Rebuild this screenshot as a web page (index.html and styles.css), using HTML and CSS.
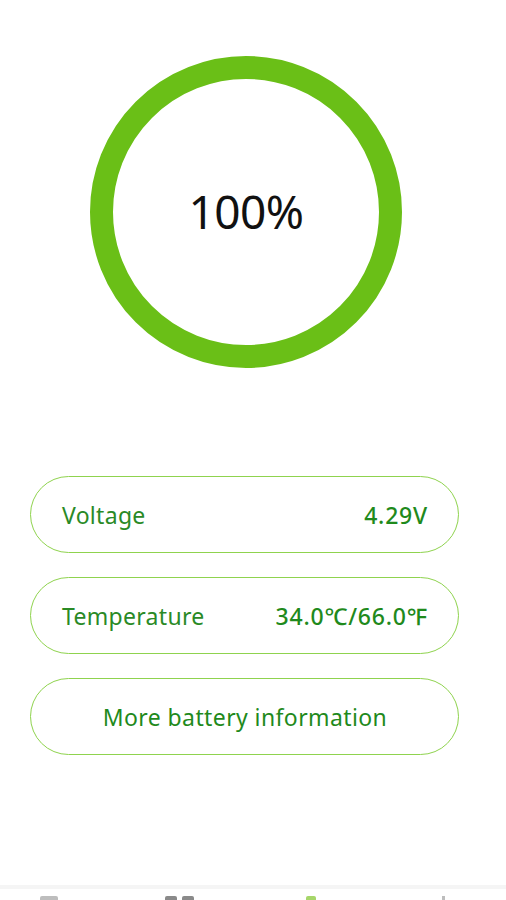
FILE: index.html
```html
<!DOCTYPE html>
<html lang="en">
<head>
<meta charset="utf-8">
<title>Battery</title>
<link rel="stylesheet" href="styles.css">
</head>
<body>
<div class="app">
  <main class="content">
    <section class="gauge-wrap">
      <div class="gauge"><span class="gauge-value">100%</span></div>
    </section>
    <section class="cards">
      <div class="card row">
        <span class="label">Voltage</span>
        <span class="value">4.29V</span>
      </div>
      <div class="card row">
        <span class="label">Temperature</span>
        <span class="value">34.0℃/66.0℉</span>
      </div>
      <div class="card center">
        <span class="link">More battery information</span>
      </div>
    </section>
  </main>
  <nav class="tabbar">
    <span class="tab tab-1"></span>
    <span class="tab tab-2"><i></i><i></i></span>
    <span class="tab tab-3"></span>
    <span class="tab tab-4"></span>
  </nav>
</div>
</body>
</html>
```
FILE: styles.css
```css
* { box-sizing: border-box; }
html, body {
  margin: 0;
  padding: 0;
  background: #ffffff;
}
body {
  font-family: "Noto Sans", "Open Sans", Arial, sans-serif;
  overflow: hidden;
}
.app {
  height: 100vh;
  overflow: hidden;
  display: flex;
  flex-direction: column;
}
.content {
  height: 885px;
  flex: none;
  padding: 56px 47px 0 30px;
}
.gauge-wrap {
  display: flex;
  justify-content: center;
  padding-left: 3px;
}
.gauge {
  width: 312px;
  height: 312px;
  border-radius: 50%;
  border: 23px solid #6abf17;
  display: flex;
  align-items: center;
  justify-content: center;
}
.gauge-value {
  font-size: 46px;
  font-weight: 400;
  color: #111111;
  letter-spacing: -0.5px;
  margin-top: -2px;
}
.cards {
  margin-top: 108px;
  display: flex;
  flex-direction: column;
  gap: 24px;
}
.card {
  height: 77px;
  border: 1.5px solid #8fd34e;
  border-radius: 39px;
  display: flex;
  align-items: center;
  padding: 0 30px 0 31px;
  font-size: 23px;
}
.row { justify-content: space-between; }
.center { justify-content: center; }
.label { font-weight: 400; color: #2a8a26; letter-spacing: 0.3px; }
.value { font-weight: 500; color: #1f8a1c; letter-spacing: 0.8px; }
.link { font-weight: 400; color: #1f8a1c; letter-spacing: 0.4px; }
.tabbar {
  flex: none;
  border-top: 4px solid #f5f5f5;
  padding-top: 7px;
  display: flex;
  align-items: flex-start;
  height: 60px;
}
.tab { display: block; height: 20px; }
.tab-1 {
  width: 18px;
  margin-left: 40px;
  background: #bdbdbd;
  border-radius: 2px;
}
.tab-2 {
  margin-left: 107px;
  display: flex;
  gap: 5px;
}
.tab-2 i {
  display: block;
  width: 12px;
  height: 20px;
  background: #8a8a8a;
  border-radius: 2px;
}
.tab-3 {
  width: 10px;
  margin-left: 112px;
  background: #a6d66a;
  border-radius: 2px;
}
.tab-4 {
  width: 3px;
  margin-left: 126px;
  background: #bdbdbd;
}
```
